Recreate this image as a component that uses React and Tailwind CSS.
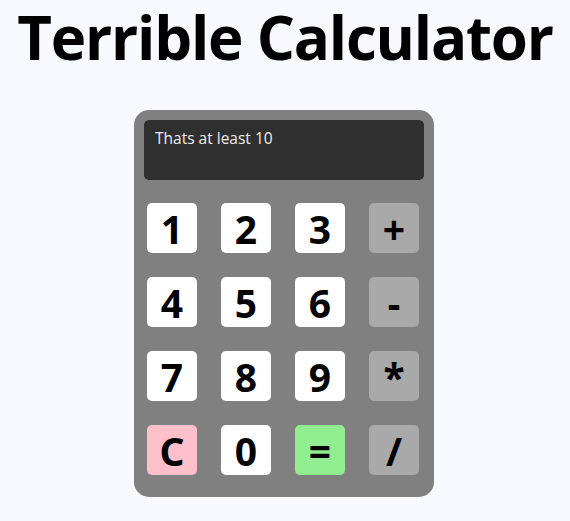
import React, { useState } from 'react';

// Keypad layout, row by row
const KEYS = [
    { label: '1', kind: 'num' },
    { label: '2', kind: 'num' },
    { label: '3', kind: 'num' },
    { label: '+', kind: 'op' },
    { label: '4', kind: 'num' },
    { label: '5', kind: 'num' },
    { label: '6', kind: 'num' },
    { label: '-', kind: 'op' },
    { label: '7', kind: 'num' },
    { label: '8', kind: 'num' },
    { label: '9', kind: 'num' },
    { label: '*', kind: 'op' },
    { label: 'C', kind: 'clear' },
    { label: '0', kind: 'num' },
    { label: '=', kind: 'equals' },
    { label: '/', kind: 'op' },
];

const keyColors = {
    num: 'bg-white',
    op: 'bg-[#a9a9a9]',
    clear: 'bg-[#ffc0cb]',
    equals: 'bg-[#90ee90]',
};

const App = () => {
    const [display, setDisplay] = useState('Thats at least 10');

    const handleKey = (key) => {
        if (key.kind === 'clear') setDisplay('');
        else if (key.kind === 'equals') setDisplay('Thats at least 10');
        else setDisplay((d) => d + key.label);
    };

    return (
        <div className="min-h-[521px] bg-[#f8f8ff] flex flex-col items-center font-['Open_Sans',sans-serif]">
            {/* Title */}
            <h1 className="text-[60px] leading-[1.2] font-bold text-black mt-[1px] tracking-[-1.2px] whitespace-nowrap">
                Terrible Calculator
            </h1>

            {/* Calculator body */}
            <div className="mt-[37px] w-[300px] bg-[#808080] rounded-[15px] p-[10px] pb-[22px] -translate-x-px">
                {/* Display */}
                <div className="h-[60px] bg-[#2f2f2f] rounded-[5px] px-[11px] pt-[7px] text-[15.5px] text-[#eeeeee]">
                    {display}
                </div>

                {/* Keypad */}
                <div className="mt-[23px] grid grid-cols-[repeat(4,50px)] gap-x-[24px] gap-y-[24px] pl-[3px]">
                    {KEYS.map((key) => (
                        <button
                            key={key.label}
                            type="button"
                            onClick={() => handleKey(key)}
                            className={`w-[50px] h-[50px] rounded-[5px] flex items-center justify-center font-['Noto_Sans',sans-serif] font-bold text-[39px] leading-none text-black ${keyColors[key.kind]}`}
                        >
                            {key.label}
                        </button>
                    ))}
                </div>
            </div>
        </div>
    );
};

export default App;
